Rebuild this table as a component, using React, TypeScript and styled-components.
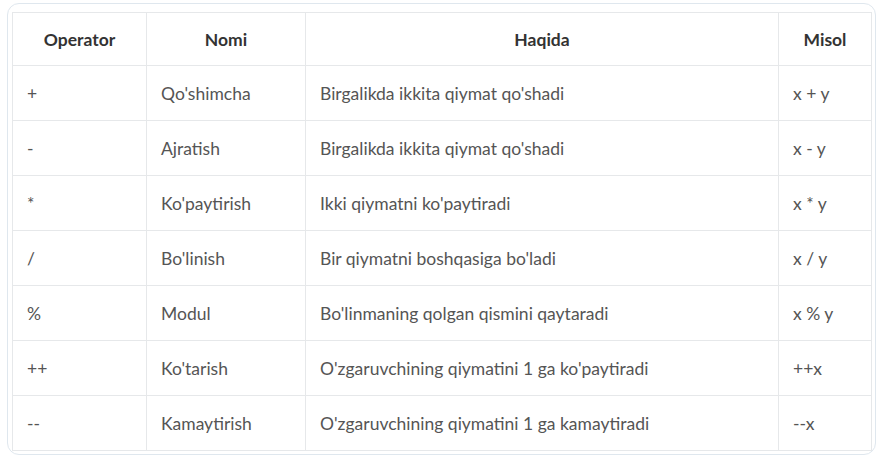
import styled, { createGlobalStyle } from "styled-components";

const GlobalStyle = createGlobalStyle`
  html, body {
    margin: 0;
    background: #ffffff;
  }
  body {
    font-family: Lato, "Liberation Sans", sans-serif;
  }
`;

const Card = styled.div`
  box-sizing: border-box;
  margin: 3px 4px 2px 7px;
  width: 869px;
  height: 452px;
  padding: 8px 5px 4px 4px;
  border: 1px solid #dfe7ee;
  border-radius: 12px;
`;

const Table = styled.table`
  width: 859px;
  border-collapse: collapse;
  table-layout: fixed;
  font-size: 17.5px;
`;

const HeadCell = styled.th<{ $width: number }>`
  box-sizing: border-box;
  width: ${(p) => p.$width}px;
  height: 53px;
  padding: 0 14px;
  border: 1px solid #e6e8ea;
  color: #333333;
  font-weight: 700;
  text-align: center;
`;

const Cell = styled.td`
  box-sizing: border-box;
  height: 55px;
  padding: 0 14px;
  border: 1px solid #e6e8ea;
  color: #555555;
  text-align: left;
  white-space: nowrap;
`;

const columns = [
  { title: "Operator", width: 134 },
  { title: "Nomi", width: 159 },
  { title: "Haqida", width: 473 },
  { title: "Misol", width: 93 },
];

const rows = [
  ["+", "Qo'shimcha", "Birgalikda ikkita qiymat qo'shadi", "x + y"],
  ["-", "Ajratish", "Birgalikda ikkita qiymat qo'shadi", "x - y"],
  ["*", "Ko'paytirish", "Ikki qiymatni ko'paytiradi", "x * y"],
  ["/", "Bo'linish", "Bir qiymatni boshqasiga bo'ladi", "x / y"],
  ["%", "Modul", "Bo'linmaning qolgan qismini qaytaradi", "x % y"],
  ["++", "Ko'tarish", "O'zgaruvchining qiymatini 1 ga ko'paytiradi", "++x"],
  ["--", "Kamaytirish", "O'zgaruvchining qiymatini 1 ga kamaytiradi", "--x"],
];

const App = () => {
  return (
    <>
      <GlobalStyle />
      <Card>
        <Table>
          <thead>
            <tr>
              {columns.map((c) => (
                <HeadCell key={c.title} $width={c.width}>
                  {c.title}
                </HeadCell>
              ))}
            </tr>
          </thead>
          <tbody>
            {rows.map((row, i) => (
              <tr key={i}>
                {row.map((text, j) => (
                  <Cell key={j}>{text}</Cell>
                ))}
              </tr>
            ))}
          </tbody>
        </Table>
      </Card>
    </>
  );
};

export default App;
